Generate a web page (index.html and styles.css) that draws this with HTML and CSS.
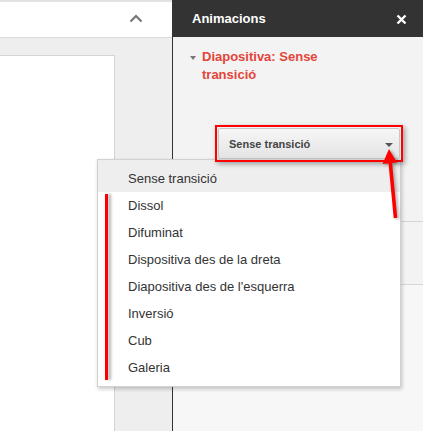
FILE: index.html
```html
<!DOCTYPE html>
<html>
<head>
<meta charset="utf-8">
<link rel="stylesheet" href="styles.css">
</head>
<body>
<div class="app">
  <div class="main">
    <div class="toolbar">
      <svg class="chevron" width="14" height="9" viewBox="0 0 14 9"><polyline points="1.5,7.5 7,2 12.5,7.5" fill="none" stroke="#777" stroke-width="2.2"/></svg>
    </div>
    <div class="workspace">
      <div class="slide"></div>
    </div>
  </div>
  <div class="panel">
    <div class="panel-header">
      <span class="panel-title">Animacions</span>
      <svg class="close" width="11" height="11" viewBox="0 0 11 11"><path d="M1.5 1.5 L9.5 9.5 M9.5 1.5 L1.5 9.5" stroke="#fff" stroke-width="2.4"/></svg>
    </div>
    <div class="panel-body">
      <div class="section-head">
        <span class="tri"></span>
        <span class="section-title">Diapositiva: Sense<br>transició</span>
      </div>
      <div class="select">
        <span class="select-label">Sense transició</span>
        <span class="select-arrow"></span>
      </div>
      <div class="divider first"></div>
      <div class="divider second"></div>
    </div>
  </div>
</div>

<div class="menu">
  <div class="item hl">Sense transició</div>
  <div class="item">Dissol</div>
  <div class="item">Difuminat</div>
  <div class="item">Dispositiva des de la dreta</div>
  <div class="item">Diapositiva des de l'esquerra</div>
  <div class="item">Inversió</div>
  <div class="item">Cub</div>
  <div class="item">Galeria</div>
</div>

<div class="mark-rect"></div>
<div class="mark-line"></div>
<svg class="mark-arrow" width="40" height="90" viewBox="0 0 40 90">
  <line x1="20" y1="20" x2="25.5" y2="78" stroke="#ff0000" stroke-width="3.6"/>
  <polygon points="19,9 12.5,24 27,22.5" fill="#ff0000"/>
</svg>
</body>
</html>
```
FILE: styles.css
```css
html, body {
  margin: 0;
  padding: 0;
}
body {
  width: 423px;
  height: 431px;
  overflow: hidden;
  position: relative;
  font-family: "Liberation Sans", Arial, sans-serif;
  background: #eeeeee;
}
.app {
  display: flex;
  height: 431px;
}
.main {
  width: 172px;
  display: flex;
  flex-direction: column;
}
.toolbar {
  height: 35px;
  background: #fff;
  border-top: 2px solid #e2e2e2;
  border-bottom: 1px solid #dadada;
  display: flex;
  align-items: center;
  justify-content: flex-end;
  padding-right: 29px;
}
.chevron {
  display: block;
  margin-top: -2px;
}
.workspace {
  flex: 1;
  background: #eeeeee;
  padding-top: 17px;
  display: flex;
}
.slide {
  width: 114px;
  background: #fff;
  border-top: 1px solid #d4d4d4;
  border-right: 1px solid #d4d4d4;
}
.panel {
  width: 250px;
  border-left: 1px solid #333;
  display: flex;
  flex-direction: column;
}
.panel-header {
  height: 37px;
  background: #333333;
  display: flex;
  align-items: center;
  justify-content: space-between;
  padding: 0 16px 0 20px;
  margin-left: -1px;
}
.panel-title {
  color: #fff;
  font-size: 13px;
  font-weight: bold;
}
.close {
  display: block;
  margin-top: 2px;
}
.panel-body {
  flex: 1;
  background: #f3f3f3;
  display: flex;
  flex-direction: column;
}
.section-head {
  display: flex;
  align-items: flex-start;
  padding: 11px 0 0 17px;
}
.tri {
  width: 0;
  height: 0;
  border-left: 3.5px solid transparent;
  border-right: 3.5px solid transparent;
  border-top: 4px solid #777;
  margin-top: 8px;
  margin-right: 6px;
}
.section-title {
  color: #e4443a;
  font-size: 13px;
  font-weight: bold;
  line-height: 18px;
}
.select {
  margin: 44px 0 0 45px;
  width: 182px;
  height: 31px;
  box-sizing: border-box;
  border: 1px solid #c6c6c6;
  border-radius: 2px;
  background: linear-gradient(#f6f6f6, #e4e4e4);
  box-shadow: 0 1px 2px rgba(0,0,0,0.15);
  display: flex;
  align-items: center;
  justify-content: space-between;
  padding: 0 6px 0 10px;
}
.select-label {
  font-size: 11px;
  font-weight: bold;
  color: #444;
}
.select-arrow {
  width: 0;
  height: 0;
  border-left: 4px solid transparent;
  border-right: 4px solid transparent;
  border-top: 4px solid #555;
  margin-top: 2px;
}
.divider {
  border-top: 1px solid #d6d6d6;
}
.divider.first {
  margin-top: 62px;
  height: 62px;
}
.divider.second {
  flex: 1;
  background: #f7f7f7;
}
.menu {
  position: absolute;
  left: 97px;
  top: 159px;
  width: 302px;
  padding: 0 0 5px 0;
  background: #fff;
  border: 1px solid rgba(0,0,0,0.18);
  box-shadow: 1px 2px 4px rgba(0,0,0,0.22);
}
.item {
  height: 27px;
  line-height: 27px;
  padding-left: 30px;
  font-size: 13px;
  color: #333;
}
.item.hl {
  background: #eeeeee;
  padding-top: 5px;
}
.mark-rect {
  position: absolute;
  left: 215px;
  top: 125px;
  width: 184px;
  height: 33px;
  border: 2px solid #ff0000;
  box-shadow: 2px 2px 5px rgba(0,0,0,0.35);
}
.mark-line {
  position: absolute;
  left: 105px;
  top: 194px;
  width: 3px;
  height: 186px;
  background: #ff0000;
  box-shadow: 3px 0 3px rgba(0,0,0,0.3);
}
.mark-arrow {
  position: absolute;
  left: 370px;
  top: 140px;
  filter: drop-shadow(2px 1px 1.5px rgba(0,0,0,0.3));
}
```
